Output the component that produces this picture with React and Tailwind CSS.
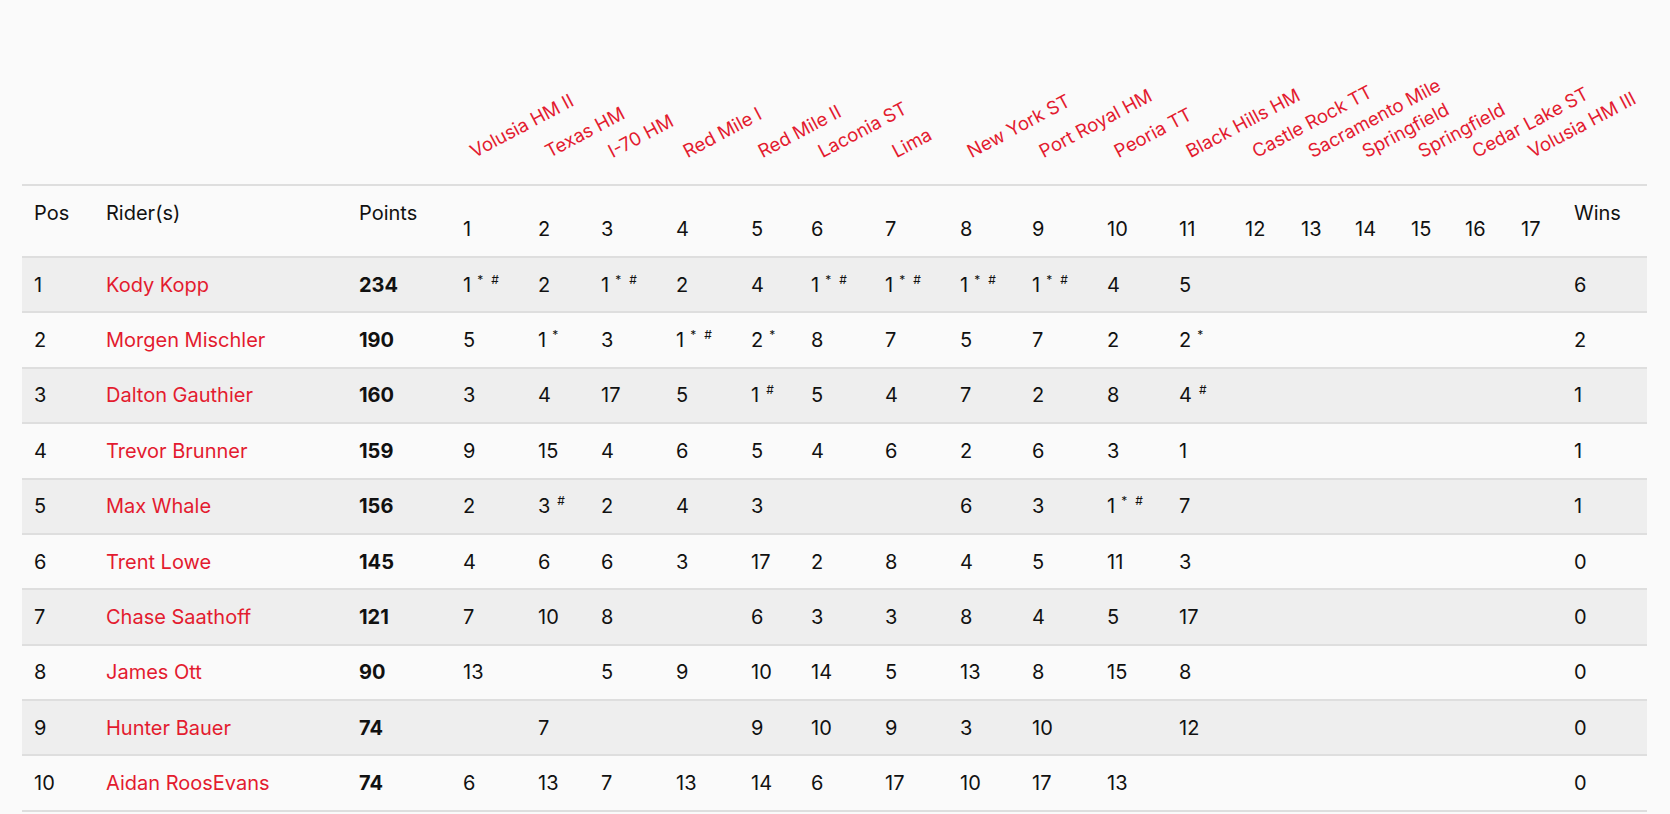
import React from 'react';

const races = [
    'Volusia HM II', 'Texas HM', 'I-70 HM', 'Red Mile I', 'Red Mile II', 'Laconia ST', 'Lima',
    'New York ST', 'Port Royal HM', 'Peoria TT', 'Black Hills HM', 'Castle Rock TT',
    'Sacramento Mile', 'Springfield', 'Springfield', 'Cedar Lake ST', 'Volusia HM III'
];

const colWidths = [
    'w-[72px]', 'w-[253px]', 'w-[104px]',
    'w-[75px]', 'w-[63px]', 'w-[75px]', 'w-[75px]', 'w-[60px]', 'w-[74px]', 'w-[75px]',
    'w-[72px]', 'w-[75px]', 'w-[72px]', 'w-[66px]', 'w-[56px]', 'w-[54px]', 'w-[56px]',
    'w-[54px]', 'w-[56px]', 'w-[53px]', 'w-[85px]'
];

// results: "" = did not score, "*" and "#" marks are shown raised
const riders = [
    { pos: 1, name: 'Kody Kopp', points: 234, wins: 6, results: ['1*#', '2', '1*#', '2', '4', '1*#', '1*#', '1*#', '1*#', '4', '5'] },
    { pos: 2, name: 'Morgen Mischler', points: 190, wins: 2, results: ['5', '1*', '3', '1*#', '2*', '8', '7', '5', '7', '2', '2*'] },
    { pos: 3, name: 'Dalton Gauthier', points: 160, wins: 1, results: ['3', '4', '17', '5', '1#', '5', '4', '7', '2', '8', '4#'] },
    { pos: 4, name: 'Trevor Brunner', points: 159, wins: 1, results: ['9', '15', '4', '6', '5', '4', '6', '2', '6', '3', '1'] },
    { pos: 5, name: 'Max Whale', points: 156, wins: 1, results: ['2', '3#', '2', '4', '3', '', '', '6', '3', '1*#', '7'] },
    { pos: 6, name: 'Trent Lowe', points: 145, wins: 0, results: ['4', '6', '6', '3', '17', '2', '8', '4', '5', '11', '3'] },
    { pos: 7, name: 'Chase Saathoff', points: 121, wins: 0, results: ['7', '10', '8', '', '6', '3', '3', '8', '4', '5', '17'] },
    { pos: 8, name: 'James Ott', points: 90, wins: 0, results: ['13', '', '5', '9', '10', '14', '5', '13', '8', '15', '8'] },
    { pos: 9, name: 'Hunter Bauer', points: 74, wins: 0, results: ['', '7', '', '', '9', '10', '9', '3', '10', '', '12'] },
    { pos: 10, name: 'Aidan RoosEvans', points: 74, wins: 0, results: ['6', '13', '7', '13', '14', '6', '17', '10', '17', '13', ''] },
];

const Result = ({ value }) => {
    const num = value.replace(/[*#]/g, '');
    const star = value.includes('*');
    const hash = value.includes('#');
    return (
        <span className="whitespace-nowrap">
            {num}
            {star && <span className="relative -top-[8px] ml-[6px] text-[12px] leading-none">*</span>}
            {hash && <span className={`relative -top-[8px] text-[12px] leading-none ${star ? 'ml-[8px]' : 'ml-[7px]'}`}>#</span>}
        </span>
    );
};

const App = () => {
    const cell = 'px-3 py-[14.7px] leading-6 text-left align-middle border-b-2 border-[#dedede]';
    const head = 'px-3 leading-6 text-left align-top font-normal border-y-2 border-[#dedede]';

    return (
        <div className="min-h-screen bg-[#fafafa] px-[22px] font-[Inter,sans-serif] text-[20px] text-[#111]">
            <table className="w-[1625px] table-fixed border-separate border-spacing-0">
                <colgroup>
                    {colWidths.map((w, i) => (
                        <col key={i} className={w} />
                    ))}
                </colgroup>
                <thead>
                    <tr>
                        <th colSpan={3} className="h-[184px] p-0"></th>
                        {races.map((race, i) => (
                            <th key={i} className="p-0 pl-[25px] pb-[23px] align-bottom text-left font-normal">
                                <div className="w-max origin-bottom-left -rotate-[28deg] whitespace-nowrap text-[18.5px] leading-5 text-[#e31b2f]">
                                    {race}
                                </div>
                            </th>
                        ))}
                        <th className="p-0"></th>
                    </tr>
                    <tr>
                        <th className={`${head} pt-[15px] pb-[31px]`}>Pos</th>
                        <th className={`${head} pt-[15px] pb-[31px]`}>Rider(s)</th>
                        <th className={`${head} pt-[15px] pb-[31px]`}>Points</th>
                        {races.map((_, i) => (
                            <th key={i} className={`${head} pt-[31px] pb-[15px]`}>
                                {i + 1}
                            </th>
                        ))}
                        <th className={`${head} pt-[15px] pb-[31px]`}>Wins</th>
                    </tr>
                </thead>
                <tbody>
                    {riders.map((r, idx) => (
                        <tr key={r.pos} className={idx % 2 === 0 ? 'bg-[#eeeeee]' : ''}>
                            <td className={cell}>{r.pos}</td>
                            <td className={`${cell} text-[#e31b2f]`}>{r.name}</td>
                            <td className={`${cell} font-bold`}>{r.points}</td>
                            {races.map((_, i) => (
                                <td key={i} className={cell}>
                                    {r.results[i] ? <Result value={r.results[i]} /> : null}
                                </td>
                            ))}
                            <td className={cell}>{r.wins}</td>
                        </tr>
                    ))}
                </tbody>
            </table>
        </div>
    );
};

export default App;
